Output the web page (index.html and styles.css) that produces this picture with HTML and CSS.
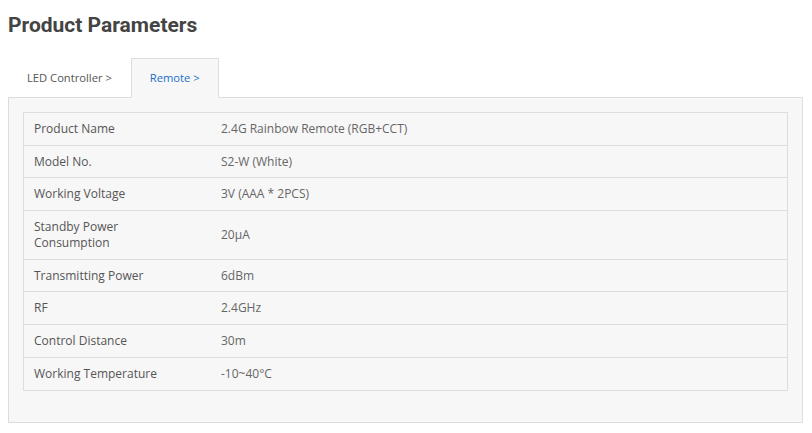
FILE: index.html
```html
<!DOCTYPE html>
<html lang="en">
<head>
<meta charset="utf-8">
<title>Product Parameters</title>
<link rel="stylesheet" href="styles.css">
</head>
<body>
<div class="page">
  <h2 class="title">Product Parameters</h2>
  <ul class="tabs">
    <li class="tab">LED Controller &gt;</li>
    <li class="tab tab-active">Remote &gt;</li>
  </ul>
  <div class="panel">
    <table class="params">
      <tr><td class="k">Product Name</td><td class="v">2.4G Rainbow Remote (RGB+CCT)</td></tr>
      <tr><td class="k">Model No.</td><td class="v">S2-W (White)</td></tr>
      <tr><td class="k">Working Voltage</td><td class="v">3V (AAA * 2PCS)</td></tr>
      <tr><td class="k">Standby Power<br>Consumption</td><td class="v">20μA</td></tr>
      <tr><td class="k">Transmitting Power</td><td class="v">6dBm</td></tr>
      <tr><td class="k">RF</td><td class="v">2.4GHz</td></tr>
      <tr><td class="k">Control Distance</td><td class="v">30m</td></tr>
      <tr><td class="k">Working Temperature</td><td class="v">-10~40°C</td></tr>
    </table>
  </div>
</div>
</body>
</html>
```

FILE: styles.css
```css
html, body {
  margin: 0;
  padding: 0;
  background: #fff;
}
.page {
  padding: 13px 9px 0 8px;
  font-family: "Open Sans", "Liberation Sans", sans-serif;
}
.title {
  margin: 0;
  font-family: Roboto, "Liberation Sans", sans-serif;
  font-weight: 700;
  font-size: 21px;
  line-height: 24px;
  color: #444;
}
.tabs {
  list-style: none;
  margin: 21px 0 -1px 0;
  padding: 0;
  display: flex;
}
.tab {
  padding: 0 18px;
  border: 1px solid transparent;
  border-bottom: 0;
  line-height: 38px;
  font-size: 11.2px;
  color: #555;
}
.tab-active {
  position: relative;
  background: #f7f7f7;
  border-color: #ddd;
  border-bottom: 1px solid #f7f7f7;
  color: #1a6fc9;
}
.panel {
  background: #f7f7f7;
  border: 1px solid #ddd;
  padding: 14px 14px 31px 14px;
}
.params {
  width: 100%;
  border-collapse: collapse;
  border: 1px solid #ddd;
  font-size: 12px;
}
.params td {
  border-top: 1px solid #ddd;
  padding: 7.85px 10px;
  line-height: 16px;
  vertical-align: middle;
}
.params .k {
  width: 167px;
  color: #555;
}
.params .v {
  color: #666;
}
```
